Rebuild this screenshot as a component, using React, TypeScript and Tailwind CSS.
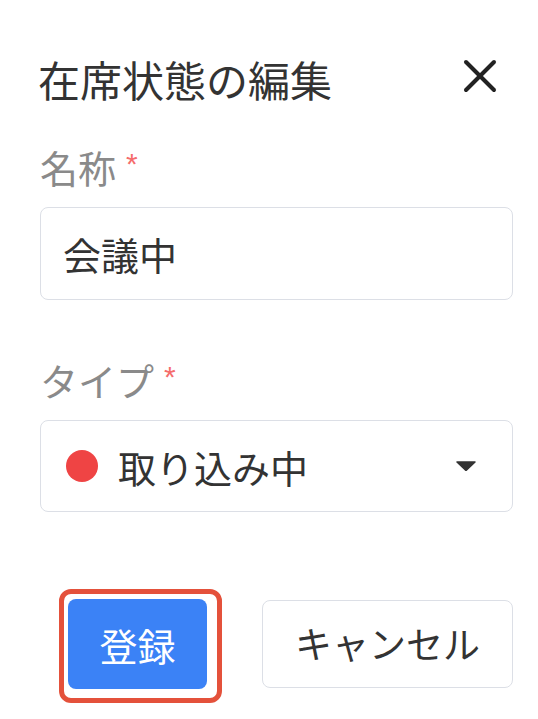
import React from 'react';

const FONT = "font-['Noto_Sans_CJK_JP','Noto_Sans',sans-serif]";

const RequiredMark: React.FC = () => (
    <span className="ml-[10px] self-start mt-[6px] text-[30px] leading-[30px] text-[#f56c6c] font-['Liberation_Sans',sans-serif]">*</span>
);

const FieldLabel: React.FC<{ text: string }> = ({ text }) => (
    <div className="flex items-start h-[48px]">
        <span className="text-[38px] leading-[48px] text-[#8a8a8a]">{text}</span>
        <RequiredMark />
    </div>
);

const App: React.FC = () => {
    return (
        <div className={`${FONT} bg-white w-[538px] h-[719px] pl-10 pr-[25px] pt-[51px] overflow-hidden`}>
            {/* header */}
            <div className="flex items-center justify-between h-[56px]">
                <h2 className="text-[42px] leading-[56px] text-[#333] font-normal -ml-[2px]">在席状態の編集</h2>
                <button className="mr-4 mb-[6px] text-[#222]">
                    <svg width="34" height="34" viewBox="0 0 34 34" fill="none" stroke="currentColor" strokeWidth="4" strokeLinecap="round">
                        <line x1="3" y1="3" x2="31" y2="31" />
                        <line x1="31" y1="3" x2="3" y2="31" />
                    </svg>
                </button>
            </div>

            {/* name */}
            <div className="mt-9">
                <FieldLabel text="名称" />
                <div className="mt-4 h-[93px] rounded-lg border border-[#dcdfe6] flex items-center px-[22px]">
                    <span className="text-[38px] text-[#333]">会議中</span>
                </div>
            </div>

            {/* type */}
            <div className="mt-14">
                <FieldLabel text="タイプ" />
                <div className="mt-4 h-[92px] rounded-lg border border-[#dcdfe6] flex items-center pl-[25px] pr-[36px]">
                    <span className="w-8 h-8 rounded-full bg-[#ef4444] shrink-0" />
                    <span className="ml-5 text-[38px] text-[#333] flex-1">取り込み中</span>
                    <svg width="20" height="10" viewBox="0 0 20 10" className="text-[#333]">
                        <polygon points="1,1 19,1 10,9.5" fill="currentColor" strokeLinejoin="round" stroke="currentColor" strokeWidth="1.5" />
                    </svg>
                </div>
            </div>

            {/* actions */}
            <div className="mt-[77px] flex items-start">
                <div className="ml-[19px] border-[5px] border-[#e4513b] rounded-[12px] pl-1 pt-[5px] pr-[10px] pb-[9px]">
                    <button className="w-[139px] h-[90px] rounded-lg bg-[#3b82f6] text-white text-[38px] flex items-center justify-center">
                        登録
                    </button>
                </div>
                <button className="ml-10 mt-[11px] w-[251px] h-[88px] rounded-lg border border-[#dcdfe6] bg-white text-[#333] text-[37px] flex items-center justify-center">
                    キャンセル
                </button>
            </div>
        </div>
    );
};

export default App;
